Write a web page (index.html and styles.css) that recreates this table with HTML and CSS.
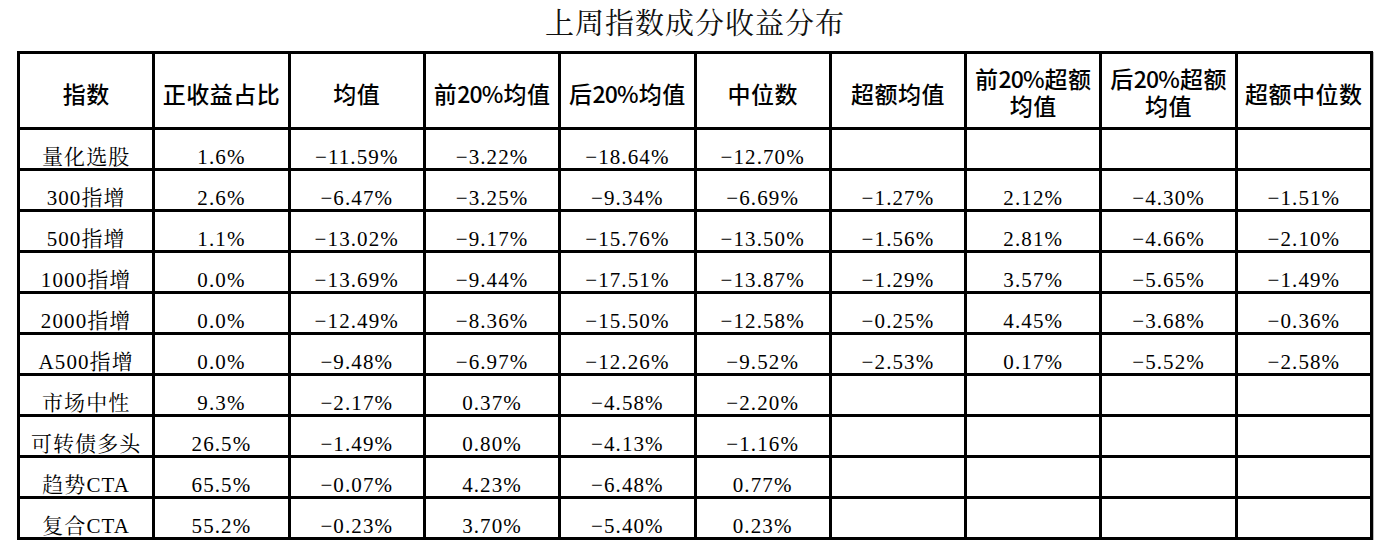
FILE: index.html
```html
<!DOCTYPE html>
<html lang="zh">
<head>
<meta charset="utf-8">
<title>上周指数成分收益分布</title>
<link rel="stylesheet" href="styles.css">
</head>
<body>
<div class="page">
  <div class="title">上周指数成分收益分布</div>
  <div class="sheet">
    <div class="hd">指数</div>
    <div class="hd">正收益占比</div>
    <div class="hd">均值</div>
    <div class="hd">前<span class="lat">20%</span>均值</div>
    <div class="hd">后<span class="lat">20%</span>均值</div>
    <div class="hd">中位数</div>
    <div class="hd">超额均值</div>
    <div class="hd two"><span class="ln">前<span class="lat">20%</span>超额</span><span class="ln">均值</span></div>
    <div class="hd two"><span class="ln">后<span class="lat">20%</span>超额</span><span class="ln">均值</span></div>
    <div class="hd">超额中位数</div>

    <div class="cell">量化选股</div><div class="cell">1.6%</div><div class="cell">−11.59%</div><div class="cell">−3.22%</div><div class="cell">−18.64%</div><div class="cell">−12.70%</div><div class="cell"></div><div class="cell"></div><div class="cell"></div><div class="cell"></div>

    <div class="cell">300指增</div><div class="cell">2.6%</div><div class="cell">−6.47%</div><div class="cell">−3.25%</div><div class="cell">−9.34%</div><div class="cell">−6.69%</div><div class="cell">−1.27%</div><div class="cell">2.12%</div><div class="cell">−4.30%</div><div class="cell">−1.51%</div>

    <div class="cell">500指增</div><div class="cell">1.1%</div><div class="cell">−13.02%</div><div class="cell">−9.17%</div><div class="cell">−15.76%</div><div class="cell">−13.50%</div><div class="cell">−1.56%</div><div class="cell">2.81%</div><div class="cell">−4.66%</div><div class="cell">−2.10%</div>

    <div class="cell">1000指增</div><div class="cell">0.0%</div><div class="cell">−13.69%</div><div class="cell">−9.44%</div><div class="cell">−17.51%</div><div class="cell">−13.87%</div><div class="cell">−1.29%</div><div class="cell">3.57%</div><div class="cell">−5.65%</div><div class="cell">−1.49%</div>

    <div class="cell">2000指增</div><div class="cell">0.0%</div><div class="cell">−12.49%</div><div class="cell">−8.36%</div><div class="cell">−15.50%</div><div class="cell">−12.58%</div><div class="cell">−0.25%</div><div class="cell">4.45%</div><div class="cell">−3.68%</div><div class="cell">−0.36%</div>

    <div class="cell">A500指增</div><div class="cell">0.0%</div><div class="cell">−9.48%</div><div class="cell">−6.97%</div><div class="cell">−12.26%</div><div class="cell">−9.52%</div><div class="cell">−2.53%</div><div class="cell">0.17%</div><div class="cell">−5.52%</div><div class="cell">−2.58%</div>

    <div class="cell">市场中性</div><div class="cell">9.3%</div><div class="cell">−2.17%</div><div class="cell">0.37%</div><div class="cell">−4.58%</div><div class="cell">−2.20%</div><div class="cell"></div><div class="cell"></div><div class="cell"></div><div class="cell"></div>

    <div class="cell">可转债多头</div><div class="cell">26.5%</div><div class="cell">−1.49%</div><div class="cell">0.80%</div><div class="cell">−4.13%</div><div class="cell">−1.16%</div><div class="cell"></div><div class="cell"></div><div class="cell"></div><div class="cell"></div>

    <div class="cell">趋势CTA</div><div class="cell">65.5%</div><div class="cell">−0.07%</div><div class="cell">4.23%</div><div class="cell">−6.48%</div><div class="cell">0.77%</div><div class="cell"></div><div class="cell"></div><div class="cell"></div><div class="cell"></div>

    <div class="cell">复合CTA</div><div class="cell">55.2%</div><div class="cell">−0.23%</div><div class="cell">3.70%</div><div class="cell">−5.40%</div><div class="cell">0.23%</div><div class="cell"></div><div class="cell"></div><div class="cell"></div><div class="cell"></div>
  </div>
</div>
</body>
</html>
```

FILE: styles.css
```css
html, body {
  margin: 0;
  padding: 0;
  background: #ffffff;
}

.page {
  padding: 0 17px;
  width: 1356px;
}

.title {
  height: 51px;
  line-height: 44px;
  text-align: center;
  font-family: "Noto Serif CJK SC", "Noto Sans CJK SC", serif;
  font-size: 29px;
  font-weight: 400;
  color: #111;
  letter-spacing: 1px;
}

.sheet {
  box-sizing: border-box;
  width: 1356px;
  display: grid;
  grid-template-columns: repeat(10, 1fr);
  grid-template-rows: 73px repeat(10, 38px);
  gap: 3px;
  padding: 3px;
  background: #000;
  box-shadow: 1px 1px 0 #b8b8b8;
}

.hd {
  background: #fff;
  display: flex;
  align-items: center;
  justify-content: center;
  text-align: center;
  font-family: "Noto Sans CJK SC", sans-serif;
  font-weight: 500;
  font-size: 23px;
  letter-spacing: 0.5px;
  line-height: 28px;
  color: #000;
  padding-top: 4px;
  white-space: nowrap;
}

.hd.two {
  flex-direction: column;
  padding-top: 2px;
}

.ln {
  display: block;
  height: 27px;
  line-height: 27px;
}

.lat {
  letter-spacing: -0.8px;
  margin-right: 0.8px;
}

.cell {
  background: #fff;
  display: flex;
  align-items: flex-end;
  justify-content: center;
  font-family: "Liberation Serif", "Noto Serif CJK SC", "Noto Sans CJK SC", serif;
  font-size: 21px;
  letter-spacing: 1.1px;
  line-height: 21px;
  color: #000;
  white-space: nowrap;
}
```
